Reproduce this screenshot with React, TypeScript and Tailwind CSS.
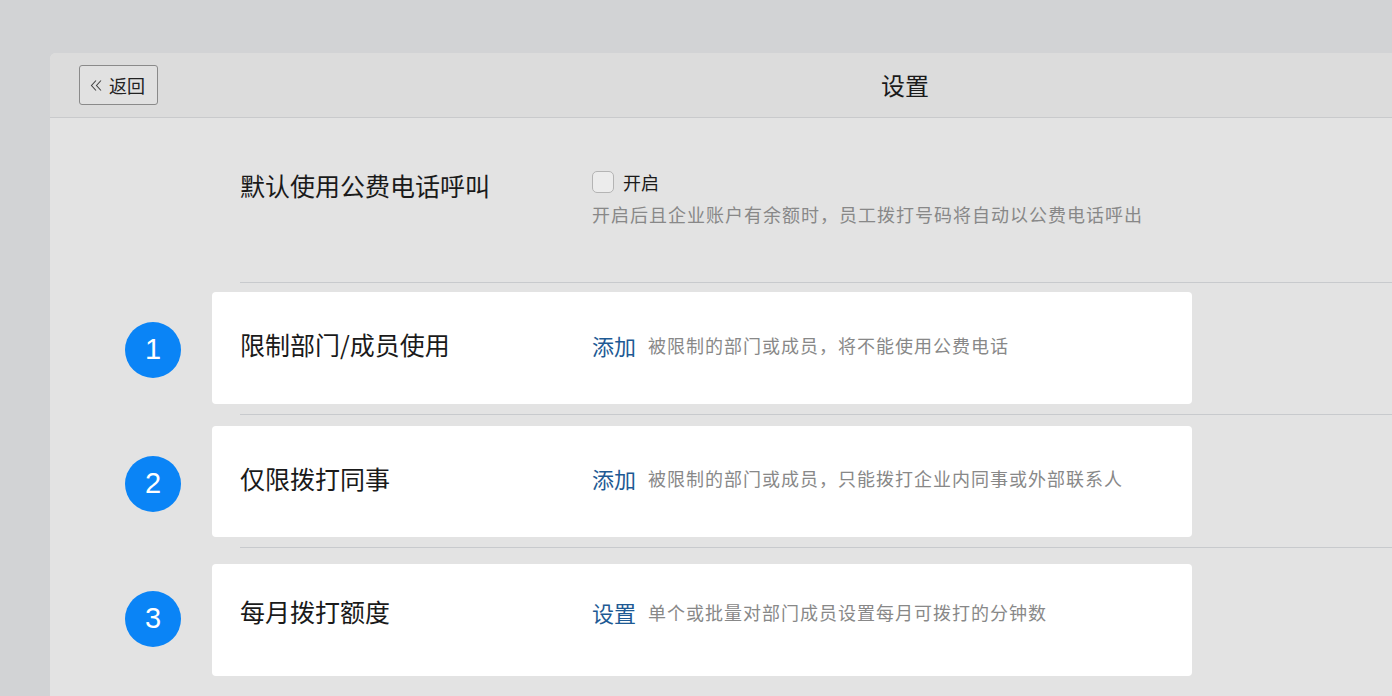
const font = { fontFamily: '"Noto Sans CJK SC", "Noto Sans", sans-serif' };

const rules = [
  { no: 1, title: "限制部门/成员使用", action: "添加", desc: "被限制的部门或成员，将不能使用公费电话", mt: "mt-[9px]", h: "h-[112px]", pb: "pb-[6px]", dot: "mt-[4px]" },
  { no: 2, title: "仅限拨打同事", action: "添加", desc: "被限制的部门或成员，只能拨打企业内同事或外部联系人", mt: "mt-[11px]", h: "h-[111px]", pb: "pb-[6px]", dot: "mt-[4px]" },
  { no: 3, title: "每月拨打额度", action: "设置", desc: "单个或批量对部门成员设置每月可拨打的分钟数", mt: "mt-[16px]", h: "h-[112px]", pb: "pb-[16px]", dot: "mt-[-2px]" },
];

const App = () => {
  return (
    <div className="w-[1392px] h-[696px] overflow-hidden bg-[#d2d3d5] pl-[50px] pt-[53px]" style={font}>
      <div className="w-[1710px] h-[700px] rounded-tl-md bg-[#e3e3e3] overflow-hidden">
        <div className="grid grid-cols-[1fr_auto_1fr] items-center h-[65px] bg-[#dcdcdc] border-b border-[#c9cacc] px-[29px]">
          <div>
            <button className="flex items-center gap-[6px] h-[40px] w-[79px] pl-[10px] border border-[#8a8a8a] rounded-[3px] bg-[#e1e1e1] text-[18px] text-[#222]">
              <svg width="13" height="13" viewBox="0 0 13 13" fill="none" stroke="#444" strokeWidth="1.1">
                <path d="M6 1.5 L1.5 6.5 L6 11.5" />
                <path d="M11 1.5 L6.5 6.5 L11 11.5" />
              </svg>
              <span>返回</span>
            </button>
          </div>
          <div className="text-[24px] text-[#1a1a1a]">设置</div>
          <div />
        </div>

        <div className="pt-[52px]">
          <div className="flex pl-[190px] pb-[56px]">
            <div className="w-[352px] text-[25px] leading-[30px] text-[#1a1a1a]">默认使用公费电话呼叫</div>
            <div>
              <label className="flex items-center gap-[9px] h-[24px] text-[18px] text-[#1a1a1a]">
                <span className="w-[22px] h-[22px] rounded-[5px] border border-[#b4b4b4] bg-[#ececec]" />
                开启
              </label>
              <div className="mt-[8px] text-[18px] tracking-[1px] leading-[24px] text-[#888]">
                开启后且企业账户有余额时，员工拨打号码将自动以公费电话呼出
              </div>
            </div>
          </div>

          {rules.map((r) => (
            <div key={r.no}>
              <div className="ml-[190px] h-px bg-[#c8cacd]" />
              <div className={`flex items-center ${r.mt}`}>
                <div className={`ml-[75px] ${r.dot} w-[56px] h-[56px] rounded-full bg-[#0a84f6] text-white text-[29px] flex items-center justify-center`} style={{ fontFamily: '"Liberation Sans", Arial, sans-serif' }}>
                  {r.no}
                </div>
                <div className={`ml-[31px] w-[980px] ${r.h} ${r.pb} rounded-[4px] bg-white flex items-center pl-[28px]`}>
                  <div className="w-[352px] text-[25px] text-[#1a1a1a]">{r.title}</div>
                  <span className="text-[22px] text-[#1e5a94]">{r.action}</span>
                  <span className="ml-[12px] text-[18px] tracking-[1px] text-[#888]">{r.desc}</span>
                </div>
              </div>
              <div className="h-[10px]" />
            </div>
          ))}
        </div>
      </div>
    </div>
  );
};

export default App;
